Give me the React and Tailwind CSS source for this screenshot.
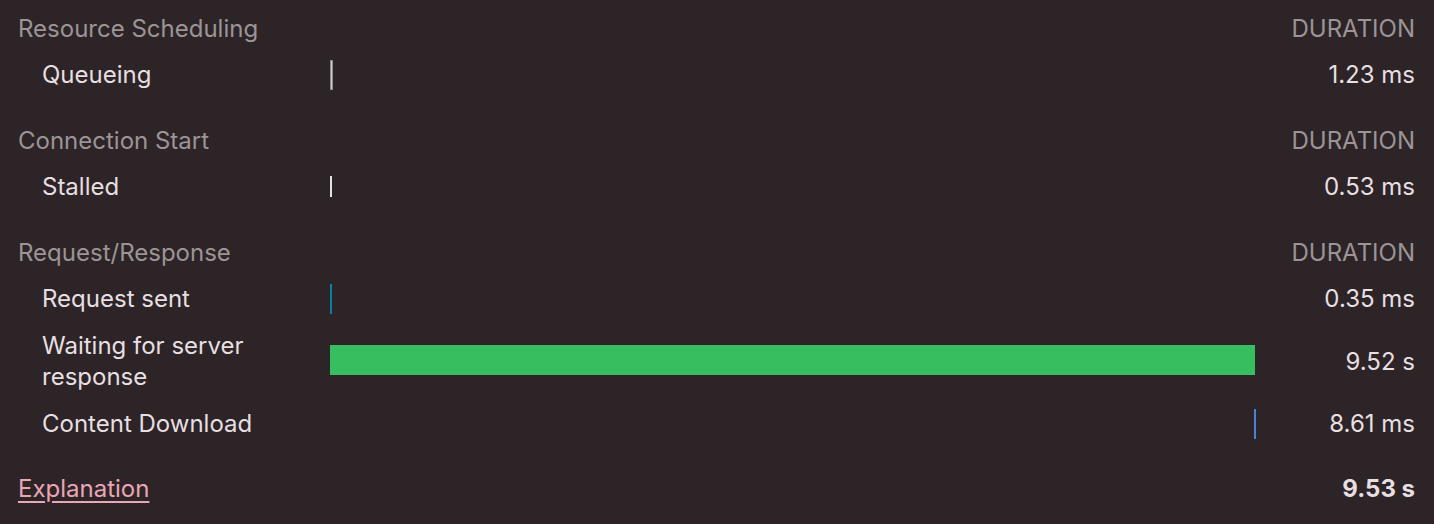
const SECTIONS = [
  {
    title: "Resource Scheduling",
    rows: [{ label: "Queueing", value: "1.23 ms", bar: "queue" }],
  },
  {
    title: "Connection Start",
    rows: [{ label: "Stalled", value: "0.53 ms", bar: "stalled" }],
  },
  {
    title: "Request/Response",
    rows: [
      { label: "Request sent", value: "0.35 ms", bar: "sent" },
      { label: "Waiting for server response", value: "9.52 s", bar: "wait", tall: true },
      { label: "Content Download", value: "8.61 ms", bar: "download" },
    ],
  },
];

function Bar({ kind }) {
  if (kind === "queue")
    return <div className="h-[30px] w-[3px] border border-[#8f8a8b] bg-[#cfcacb]" />;
  if (kind === "stalled") return <div className="h-[21px] w-[2px] bg-[#e4e0e1]" />;
  if (kind === "sent") return <div className="h-[30px] w-[2px] bg-[#0b7fa6]" />;
  if (kind === "wait") return <div className="mb-[2px] h-[30px] w-full bg-[#37be5f]" />;
  return (
    <div className="flex h-[30px] w-full justify-end pr-[-1px]">
      <div className="h-full w-[2px] translate-x-[1px] bg-[#4d80dc]" />
    </div>
  );
}

export default function App() {
  return (
    <div
      className="min-h-[524px] w-full bg-[#2c2426] pl-[18px] pr-[19px] pt-[6px] text-[24px]"
      style={{ fontFamily: "Inter, 'Noto Sans', sans-serif" }}
    >
      {SECTIONS.map((s, i) => (
        <div key={s.title} className={i > 0 ? "mt-[20px]" : ""}>
          <div className="flex h-[45px] items-center justify-between leading-[31px] text-[#9c9496]">
            <span>{s.title}</span>
            <span>DURATION</span>
          </div>
          {s.rows.map((r) => (
            <div
              key={r.label}
              className={`grid grid-cols-[312px_925px_1fr] items-center ${r.tall ? "h-[78px]" : "h-[47px]"}`}
            >
              <div className="pl-[24px] pr-4 leading-[31px] text-[#e7dfe1]">{r.label}</div>
              <div className="flex items-center">
                <Bar kind={r.bar} />
              </div>
              <div className="text-right leading-[31px] text-[#e7dfe1]">{r.value}</div>
            </div>
          ))}
        </div>
      ))}
      <div className="mt-[19px] flex h-[45px] items-center justify-between leading-[31px]">
        <a href="#" className="text-[#eba6b6] underline underline-offset-[4px]">
          Explanation
        </a>
        <span className="font-bold text-[#e7dfe1]">9.53 s</span>
      </div>
    </div>
  );
}
